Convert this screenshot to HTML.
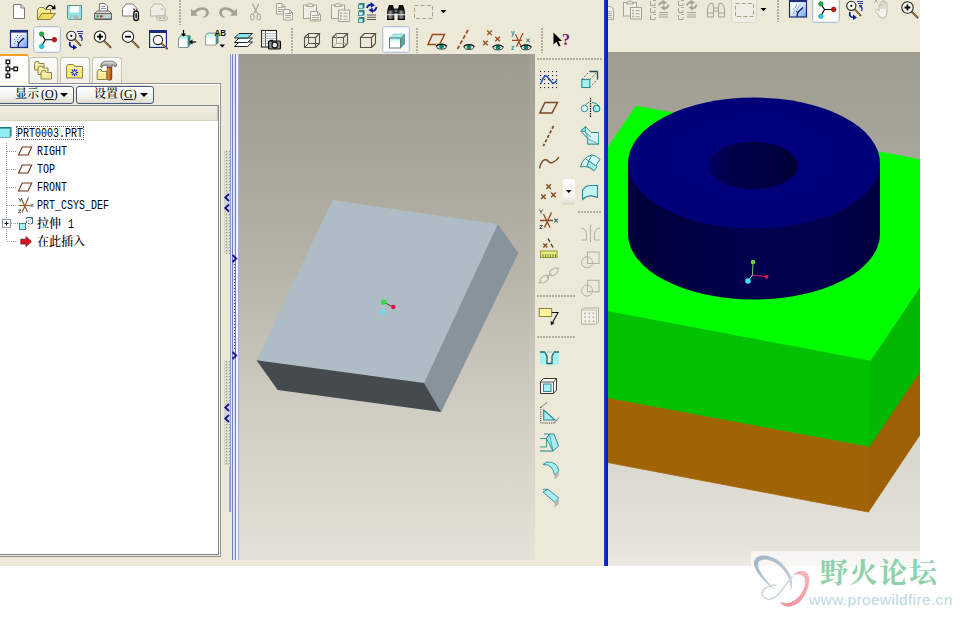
<!DOCTYPE html>
<html><head><meta charset="utf-8"><title>Pro/ENGINEER</title>
<style>
html,body{margin:0;padding:0;background:#fff;}
body{width:962px;height:618px;position:relative;overflow:hidden;font-family:"Liberation Sans","Noto Sans CJK SC",sans-serif;}
.abs{position:absolute;}
#app{position:absolute;left:0;top:0;width:920px;height:566px;background:#ece9d8;overflow:hidden;}
.ic{position:absolute;overflow:visible;}
.btnp{position:absolute;background:#fdfdfb;border:1px solid #b9c4d6;border-radius:3px;box-sizing:border-box;box-shadow:inset 0 0 2px #dfe6f0;}
.vsep{position:absolute;width:2px;background:repeating-linear-gradient(to bottom,#b3b0a2 0,#b3b0a2 2px,transparent 2px,transparent 3px);}
.hsep{position:absolute;height:2px;background:repeating-linear-gradient(to right,#b3b0a2 0,#b3b0a2 2px,transparent 2px,transparent 3px);}
.tab{position:absolute;top:57px;height:26px;box-sizing:border-box;border:1px solid #c6c5b8;border-bottom:none;border-radius:3px 3px 0 0;background:linear-gradient(#fcfcf9,#f1f0e8);}
.tbtn{position:absolute;top:86px;height:18px;box-sizing:border-box;border:1px solid #44597c;border-radius:3px;background:linear-gradient(#ffffff,#f3f2ec 60%,#dedccd);font:500 12px/15px "Liberation Serif","Noto Serif CJK SC",serif;color:#000;white-space:nowrap;}
.tree{position:absolute;font:12px/18px "Liberation Mono","Noto Sans CJK SC",monospace;color:#000;white-space:nowrap;}
.tl{position:absolute;left:0;height:18px;line-height:18px;}
.mc{display:inline-block;width:6px;text-align:center;font-family:"Liberation Serif",serif;font-size:12.5px;overflow:visible;}
.mono{display:inline-block;transform-origin:0 50%;transform:scaleX(0.833);font-family:"Liberation Mono",monospace;font-size:12px;letter-spacing:0;}
</style></head><body>
<div id="app">

<div class="abs" style="left:239px;top:54px;width:296px;height:506px;background:linear-gradient(#9d9b90 0%,#a7a59a 20%,#b8b6aa 45%,#cfcdc2 70%,#e3e1d7 100%);"></div>
<div class="abs" style="left:529px;top:54px;width:6px;height:506px;background:rgba(255,255,255,0.05);"></div>
<svg class="abs" style="left:238px;top:54px" width="297" height="506" viewBox="238 54 297 506">
<polygon points="332.4,200 497.9,224.2 424.1,383 256.5,360.2" fill="#adbcc5"/>
<polygon points="497.9,224.2 518.3,253.1 441.2,411.9 424.1,383" fill="#88949c"/>
<polygon points="256.5,360.2 424.1,383 441.2,411.9 277.7,389.9" fill="#454a4f"/>
<line x1="383.5" y1="302" x2="392" y2="306.5" stroke="#7a2a3a" stroke-width="1"/>
<line x1="383.5" y1="302" x2="383" y2="311" stroke="#8fd8e0" stroke-width="1"/>
<circle cx="383.7" cy="302.2" r="2.6" fill="#30e040"/>
<circle cx="393.3" cy="307" r="2.2" fill="#e01040"/>
<circle cx="383" cy="312.3" r="2.3" fill="#60e0f0"/>
</svg>

<div class="abs" style="left:608px;top:52px;width:312px;height:514px;background:linear-gradient(#a09e93 0%,#a5a398 15%,#b3b1a5 35%,#cccabf 60%,#dbd9cf 80%,#e5e3da 97%,#eceae3 100%);"></div>
<svg class="abs" style="left:608px;top:52px" width="312" height="514" viewBox="608 52 312 514"><g stroke-width="0.8" stroke-linejoin="round">
<defs>
<linearGradient id="cyl" x1="0" x2="1" y1="0" y2="0">
<stop offset="0" stop-color="#00003a"/><stop offset="0.2" stop-color="#000042"/><stop offset="0.5" stop-color="#00004e"/><stop offset="0.8" stop-color="#00004c"/><stop offset="1" stop-color="#00003e"/>
</linearGradient>
<linearGradient id="hole" x1="0" x2="1" y1="0" y2="0">
<stop offset="0" stop-color="#00005e"/><stop offset="0.3" stop-color="#000048"/><stop offset="0.6" stop-color="#000044"/><stop offset="0.85" stop-color="#00003a"/><stop offset="1" stop-color="#00002c"/>
</linearGradient>
<radialGradient id="topf" cx="0.5" cy="0.45" r="0.6">
<stop offset="0" stop-color="#00007e"/><stop offset="1" stop-color="#000076"/>
</radialGradient>
</defs>
<polygon points="608,147 636,106 920,159.6 920,288 870.7,361.2 608,311.6" fill="#00fe00" stroke="#00fe00"/>
<polygon points="608,311.6 870.7,361.2 869.5,447.2 608,398.5" fill="#02c102" stroke="#00c200"/>
<polygon points="870.7,361.2 920,288 920,372.5 869.5,447.2" fill="#02b802" stroke="#00b600"/>
<polygon points="608,398.5 869.5,447.2 868.4,512 608,462.6" fill="#a06406" stroke="#a06406"/>
<polygon points="869.5,447.2 920,372.5 920,434.7 868.4,512" fill="#9c6006" stroke="#9c6006"/>
</g><path d="M628,163 L628,234 A126,65.5 0 0 0 880,234 L880,163 Z" fill="url(#cyl)"/>
<ellipse cx="754" cy="163" rx="126" ry="65.5" fill="url(#topf)"/>
<ellipse cx="753" cy="165.5" rx="44.6" ry="23.8" fill="url(#hole)"/>
<line x1="752.5" y1="275" x2="753" y2="262" stroke="#80d060" stroke-width="1"/>
<line x1="752.5" y1="275" x2="766" y2="276.7" stroke="#e02050" stroke-width="1"/>
<line x1="752.5" y1="275" x2="748" y2="281" stroke="#a0e8f0" stroke-width="1"/>
<circle cx="753" cy="262" r="2.3" fill="#70d040"/>
<circle cx="766.5" cy="276.7" r="2" fill="#e01040"/>
<circle cx="748" cy="281" r="2.8" fill="#40e0ff"/>
</svg>
<div class="abs" style="left:604px;top:0;width:4px;height:566px;background:linear-gradient(to right,#1a40d0,#0828b8 60%,#0520a0);"></div>

<div class="abs" style="left:230px;top:54px;width:9px;height:506px;background:linear-gradient(to right,#ece9d8 0,#ece9d8 2px,#7484b8 2px,#7484b8 3px,#dfe5ff 3px,#dfe5ff 5px,#6c7cac 5px,#6c7cac 6px,#f4f6ff 6px,#f4f6ff 8px,#a4acd8 8px,#a4acd8 9px);"></div>
<div class="abs" style="left:230px;top:54px;width:2px;height:458px;background:linear-gradient(to right,#8c9cd8 0,#8c9cd8 1px,#e4e8fc 1px,#e4e8fc 2px);"></div>

<div class="abs" style="left:229px;top:466px;width:1px;height:46px;background:#a9a8c0;"></div>
<svg class="abs" style="left:0;top:0" width="240" height="566">
<defs><pattern id="gp" width="3" height="3" patternUnits="userSpaceOnUse"><rect width="3" height="3" fill="#d6d4c8"/><rect x="0" y="0" width="1" height="1" fill="#fff"/><rect x="1" y="1" width="1" height="1" fill="#9c9a8c"/></pattern></defs>
<rect x="224" y="150" width="6" height="104" fill="url(#gp)" shape-rendering="crispEdges"/><rect x="224" y="360" width="6" height="105" fill="url(#gp)" shape-rendering="crispEdges"/>
<rect x="224" y="193" width="6" height="20" fill="#d0d0e0"/>
<rect x="224" y="403" width="6" height="20" fill="#d0d0e0"/>
<polyline points="229,194 225.2,197.5 229,201" fill="none" stroke="#10108c" stroke-width="1.7"/>
<polyline points="229,204.5 225.2,208.0 229,211.5" fill="none" stroke="#10108c" stroke-width="1.7"/>
<polyline points="229,404 225.2,407.5 229,411" fill="none" stroke="#10108c" stroke-width="1.7"/>
<polyline points="229,415 225.2,418.5 229,422" fill="none" stroke="#10108c" stroke-width="1.7"/>
<polyline points="232.5,255 236.3,258.5 232.5,262" fill="none" stroke="#10108c" stroke-width="1.7"/>
<polyline points="232.5,352 236.3,355.5 232.5,359" fill="none" stroke="#10108c" stroke-width="1.7"/>
<line x1="234.5" y1="264" x2="234.5" y2="350" stroke="#404070" stroke-width="1" stroke-dasharray="1,2"/>
</svg>
<div class="abs" style="left:0;top:83px;width:221px;height:474px;box-sizing:border-box;border:1px solid #8e9094;border-left:none;background:#ece9d8;box-shadow:inset -1px 0 0 #fff, inset 0 1px 0 #fff;"></div>
<div class="abs" style="left:0;top:105px;width:219px;height:450px;box-sizing:border-box;border:1px solid #7c8590;border-left:none;background:#fff;"></div>
<div class="abs" style="left:0;top:106px;width:218px;height:15px;background:linear-gradient(#efede0,#e8e5d4);border-bottom:1px solid #d6d2c2;border-right:1px solid #c8c5b5;box-sizing:border-box;"></div>
<div class="abs" style="left:0;top:54px;width:29px;height:30px;background:#fdfdfb;border-right:1px solid #c6c5b8;border-top:2px solid #f5a020;border-radius:0 3px 0 0;box-sizing:border-box;"></div>
<div class="tab" style="left:29px;width:29px;"></div>
<div class="tab" style="left:60px;width:30px;"></div>
<div class="tab" style="left:92px;width:30px;"></div>
<div class="tbtn" style="left:-6px;width:80px;"><span style="position:absolute;left:20px;top:0;">显示<span style="margin-left:2px">(<u>O</u>)</span></span><span style="position:absolute;left:65px;top:6px;width:0;height:0;border:4px solid transparent;border-top:4.5px solid #000;border-bottom:none;"></span></div>
<div class="tbtn" style="left:76px;width:78px;"><span style="position:absolute;left:17px;top:0;">设置<span style="margin-left:2px">(<u>G</u>)</span></span><span style="position:absolute;left:63px;top:6px;width:0;height:0;border:4px solid transparent;border-top:4.5px solid #000;border-bottom:none;"></span></div>

<div class="tree" style="left:0;top:0;width:219px;height:560px;">
<div class="abs" style="left:16px;top:126px;width:68px;height:14px;border:1px dotted #555;box-sizing:border-box;"></div>
<div class="tl" style="top:125px;left:17px;"><span class="mono">PRT0003.PRT</span></div>
<div class="tl" style="top:143px;left:37px;"><span class="mono">RIGHT</span></div>
<div class="tl" style="top:161px;left:37px;"><span class="mono">TOP</span></div>
<div class="tl" style="top:179px;left:37px;"><span class="mono">FRONT</span></div>
<div class="tl" style="top:197px;left:37px;"><span class="mono">PRT_CSYS_DEF</span></div>
<div class="tl" style="top:214px;left:37px;"><span style="font-family:'Noto Serif CJK SC',serif;font-size:12px;font-weight:500;">拉伸</span> <span class="mono">1</span></div>
<div class="tl" style="top:232px;left:37px;"><span style="font-family:'Noto Serif CJK SC',serif;font-size:12px;font-weight:500;">在此插入</span></div>
</div>
<svg class="abs" style="left:0;top:0" width="230" height="260" viewBox="0 0 230 260"><rect x="6.1" y="60.1" width="3.6" height="3.6" fill="#fff" stroke="#000" stroke-width="1.2"/><rect x="6.1" y="67.1" width="3.6" height="3.6" fill="#fff" stroke="#000" stroke-width="1.2"/><rect x="6.1" y="74.1" width="3.6" height="3.6" fill="#fff" stroke="#000" stroke-width="1.2"/><rect x="13.9" y="67.1" width="3.6" height="3.6" fill="#fff" stroke="#000" stroke-width="1.2"/><path d="M7.9,64.3 V66.6 M7.9,71.3 V73.6 M10.3,68.9 H13.4" stroke="#000" stroke-width="1.1"/><path d="M34.5,70.0 V63.5 L36,61.5 H38.41 L39.25,63.5 H44.0 V70.0 Z" fill="#f7ec92" stroke="#8a8250" stroke-width="1"/><path d="M35.5,64.8 H43.0" stroke="#fffbe0" stroke-width="1"/><path d="M38.0,74.5 V68.0 L39.5,66.0 H42.12 L43.0,68.0 H48.0 V74.5 Z" fill="#f7ec92" stroke="#8a8250" stroke-width="1"/><path d="M39.0,69.3 H47.0" stroke="#fffbe0" stroke-width="1"/><path d="M41.0,79.0 V72.5 L42.5,70.5 H45.33 L46.25,72.5 H51.5 V79.0 Z" fill="#f7ec92" stroke="#8a8250" stroke-width="1"/><path d="M42.0,73.8 H50.5" stroke="#fffbe0" stroke-width="1"/><path d="M66.5,78.0 V66.5 L68,64.5 H73.14 L74.5,66.5 H82.5 V78.0 Z" fill="#f7ea70" stroke="#8a8250" stroke-width="1"/><path d="M67.5,67.8 H81.5" stroke="#fffbe0" stroke-width="1"/><path d="M74.5,68.8 V76.2 M70.8,72.5 H78.2 M71.9,69.9 L77.1,75.1 M77.1,69.9 L71.9,75.1" stroke="#1030c0" stroke-width="1.2"/><circle cx="74.5" cy="72.5" r="1.2" fill="#fff"/><path d="M97.2,79.5 V71.5 L98.7,69.5 H101.11 L101.95,71.5 H106.7 V79.5 Z" fill="#f7ec92" stroke="#8a8250" stroke-width="1"/><path d="M98.2,72.8 H105.7" stroke="#fffbe0" stroke-width="1"/><defs><linearGradient id="hh" x1="0" y1="0" x2="0" y2="1"><stop offset="0" stop-color="#e8e8e8"/><stop offset="1" stop-color="#7a7a7a"/></linearGradient><linearGradient id="hd" x1="0" x2="1"><stop offset="0" stop-color="#f0b040"/><stop offset="0.5" stop-color="#d07020"/><stop offset="1" stop-color="#8a3a10"/></linearGradient></defs><path d="M100.5,66.5 Q101,62 105,61.2 H112 Q116,61.5 117,65.5 L115,67 Q114,64.8 112,65 V67.8 H107 V65 Q103,64.5 102,67.5 Z" fill="url(#hh)" stroke="#555" stroke-width="0.7"/><rect x="107.2" y="67.5" width="4.6" height="12.5" rx="1.5" fill="url(#hd)" stroke="#6a3010" stroke-width="0.7"/><path d="M-2,128.5 L0,127 H11.5 V136 L10,137.5 H-2 Z" fill="#1a7a80"/><rect x="-2" y="128.5" width="12" height="9" fill="#8ef0f0" stroke="#5aa0a8" stroke-width="0.7"/><path d="M6.5,143 V241" stroke="#9a9a9a" stroke-width="1" stroke-dasharray="1,1"/><path d="M7,151.5 H17" stroke="#9a9a9a" stroke-width="1" stroke-dasharray="1,1"/><path d="M7,169.5 H17" stroke="#9a9a9a" stroke-width="1" stroke-dasharray="1,1"/><path d="M7,187.5 H17" stroke="#9a9a9a" stroke-width="1" stroke-dasharray="1,1"/><path d="M7,205.5 H17" stroke="#9a9a9a" stroke-width="1" stroke-dasharray="1,1"/><path d="M7,241.5 H17" stroke="#9a9a9a" stroke-width="1" stroke-dasharray="1,1"/><path d="M11,223.5 H18" stroke="#9a9a9a" stroke-width="1" stroke-dasharray="1,1"/><path d="M22.2,147 H31.8 L28,155 H18.6 Z" fill="#fff" stroke="#6e3418" stroke-width="1.1"/><path d="M22.2,165 H31.8 L28,173 H18.6 Z" fill="#fff" stroke="#6e3418" stroke-width="1.1"/><path d="M22.2,183 H31.8 L28,191 H18.6 Z" fill="#fff" stroke="#6e3418" stroke-width="1.1"/><path d="M18.5,205.5 H30.5 M21.5,199 L27.5,212 M28.5,197.5 L22,212.5" stroke="#9a5a2a" stroke-width="1.2" fill="none"/><path d="M18.5,198 L20.3,200.5 L22,198 M20.3,200.5 V202" stroke="#444" stroke-width="0.9" fill="none"/><path d="M18.5,210 H21 L18.5,212.8 H21" stroke="#444" stroke-width="0.9" fill="none"/><path d="M30.5,203.8 L33.5,207 M33.5,203.8 L30.5,207" stroke="#556" stroke-width="1"/><rect x="2.5" y="219.5" width="8" height="8" fill="#fff" stroke="#8a9aa8" stroke-width="1"/><path d="M4.5,223.5 H8.5 M6.5,221.5 V225.5" stroke="#000" stroke-width="1"/><rect x="19.5" y="223.5" width="6" height="6" fill="#a8f0f4" stroke="#3a8a98" stroke-width="1"/><path d="M26.5,217.5 H32.5 V223.5" fill="none" stroke="#3a6a78" stroke-width="1"/><path d="M26.5,217.5 V222 M28,223.5 H32.5" fill="none" stroke="#3a6a78" stroke-width="1" stroke-dasharray="1.5,1.5"/><path d="M25.5,223.5 L32.5,217.5" stroke="#3a6a78" stroke-width="0.9" stroke-dasharray="2,1.2"/><path d="M25.5,229.5 L31,224" stroke="#c05050" stroke-width="0.8" stroke-dasharray="1.5,1.5"/><path d="M20.8,239.2 H26 V236.6 L31.4,241.6 L26,246.6 V244 H20.8 Z" fill="#d81424" stroke="#6a0008" stroke-width="0.7"/></svg>
<div class="abs" style="left:535px;top:54px;width:69px;height:512px;background:#ece9d8;"></div>
<div class="hsep" style="left:537px;top:58px;width:66px;"></div>
<div class="hsep" style="left:578px;top:211px;width:24px;"></div>
<div class="hsep" style="left:537px;top:295px;width:39px;"></div>
<div class="hsep" style="left:537px;top:336px;width:39px;"></div>
<svg class="abs" style="left:0;top:0" width="610" height="566" viewBox="0 0 610 566"><rect x="540" y="71" width="1.1" height="1.1" fill="#223"/><rect x="540" y="75" width="1.1" height="1.1" fill="#223"/><rect x="540" y="79" width="1.1" height="1.1" fill="#223"/><rect x="540" y="83" width="1.1" height="1.1" fill="#223"/><rect x="540" y="87" width="1.1" height="1.1" fill="#223"/><rect x="544" y="71" width="1.1" height="1.1" fill="#223"/><rect x="544" y="75" width="1.1" height="1.1" fill="#223"/><rect x="544" y="79" width="1.1" height="1.1" fill="#223"/><rect x="544" y="83" width="1.1" height="1.1" fill="#223"/><rect x="544" y="87" width="1.1" height="1.1" fill="#223"/><rect x="548" y="71" width="1.1" height="1.1" fill="#223"/><rect x="548" y="75" width="1.1" height="1.1" fill="#223"/><rect x="548" y="79" width="1.1" height="1.1" fill="#223"/><rect x="548" y="83" width="1.1" height="1.1" fill="#223"/><rect x="548" y="87" width="1.1" height="1.1" fill="#223"/><rect x="552" y="71" width="1.1" height="1.1" fill="#223"/><rect x="552" y="75" width="1.1" height="1.1" fill="#223"/><rect x="552" y="79" width="1.1" height="1.1" fill="#223"/><rect x="552" y="83" width="1.1" height="1.1" fill="#223"/><rect x="552" y="87" width="1.1" height="1.1" fill="#223"/><rect x="556" y="71" width="1.1" height="1.1" fill="#223"/><rect x="556" y="75" width="1.1" height="1.1" fill="#223"/><rect x="556" y="79" width="1.1" height="1.1" fill="#223"/><rect x="556" y="83" width="1.1" height="1.1" fill="#223"/><rect x="556" y="87" width="1.1" height="1.1" fill="#223"/><path d="M541,83.5 Q544,74 547,76.5 Q550,80 552.5,83 Q554.5,84 556.8,80.5" fill="none" stroke="#2a56c8" stroke-width="1.7"/><path d="M589.5,71.5 H597.5 V79.5" fill="none" stroke="#2a4a50" stroke-width="1.3"/><path d="M581.8,79.5 L589.5,71.5 M589.8,79.5 L597.5,71.5 M589.8,87.5 L597.5,79.5" stroke="#4a6a70" stroke-width="0.9" stroke-dasharray="2,1.5"/><rect x="581.8" y="79.5" width="8" height="8" fill="#a8f0f4" stroke="#2a8a90" stroke-width="1.1"/><path d="M545,102.5 H557.5 L552,113 H539.8 Z" fill="none" stroke="#7a4a28" stroke-width="1.5"/><path d="M590.5,98 V117" stroke="#111" stroke-width="1.3" stroke-dasharray="1.5,1"/><circle cx="584.5" cy="108.5" r="3.2" fill="#dffafa" stroke="#2a8a90" stroke-width="1"/><circle cx="596.5" cy="108.5" r="3.2" fill="#a8f0f4" stroke="#2a8a90" stroke-width="1.2"/><path d="M585.5,105 L589,102 M592,102.5 Q597,102.5 599,106" fill="none" stroke="#2a8a90" stroke-width="1" /><path d="M553.5,126 L543.3,146" stroke="#7a4a28" stroke-width="1.7" stroke-dasharray="3.2,1.8"/><path d="M539.5,168.5 Q541,161 545,159.5 Q547.5,159.5 549.5,162.5 Q552,163.5 555,161 Q557.5,159.5 558.8,157" fill="none" stroke="#7a4a28" stroke-width="1.4"/><path d="M580.8,131 L585.5,126.5 L591,132.5 H598.5 V144 H587.5 V138.5 Z" fill="#e8fbfb" stroke="#2a8a90" stroke-width="1"/><path d="M580.8,131 L585.5,126.5 L585.5,132 Z" fill="#70e0dc" stroke="#2a8a90" stroke-width="0.8"/><path d="M585.5,132 L598.5,144 H587.5 V138.5 Z" fill="#b8e8e8" stroke="#2a8a90" stroke-width="0.8"/><path d="M587.5,138.5 L598.5,144 L598.5,133" fill="#d0f4f4" stroke="#2a8a90" stroke-width="0.6"/><path d="M580.5,167 Q583,157 592,155 Q597,155.5 600,159.5 Q596,164 594,171 Q588,165 580.5,167 Z" fill="#d8fafa" stroke="#2a8a90" stroke-width="1"/><path d="M585.5,159 Q590,161 597,167 M592,155 Q588,161 587,166" fill="none" stroke="#2a8a90" stroke-width="0.9"/><path d="M589,161.5 L597,166.5 L594,171 Q591,167.5 587,166 Z" fill="#a8f0f4" stroke="#2a8a90" stroke-width="0.7"/><path d="M546.3000000000001,184.29999999999998 L550.9,188.9 M550.9,184.29999999999998 L546.3000000000001,188.9" stroke="#8a4a20" stroke-width="1.4"/><path d="M551.1,192.6 L555.6999999999999,197.20000000000002 M555.6999999999999,192.6 L551.1,197.20000000000002" stroke="#8a4a20" stroke-width="1.4"/><path d="M541.1,194.5 L545.6999999999999,199.10000000000002 M545.6999999999999,194.5 L541.1,199.10000000000002" stroke="#8a4a20" stroke-width="1.4"/><defs><linearGradient id="dd" x1="0" y1="0" x2="0" y2="1"><stop offset="0" stop-color="#fdfdfb"/><stop offset="0.7" stop-color="#f4f3ee"/><stop offset="1" stop-color="#d8d6ca"/></linearGradient></defs><rect x="562.5" y="179" width="12.5" height="26" rx="2" fill="url(#dd)"/><path d="M566,190 H571.5 L568.7,193 Z" fill="#000"/><path d="M582.5,199.5 V190.5 Q585,185.5 591,185.5 H597.5 V197.5 Q589,193.5 582.5,199.5 Z" fill="#c4f4f8" stroke="#2a8a90" stroke-width="1.1"/><path d="M540,220.5 H553 M543.5,214 L550,227.5 M551.5,212.5 L544.5,227.5" stroke="#8a4a20" stroke-width="1.3" fill="none"/><path d="M539.2,209.5 L541,212 L542.8,209.5 M541,212 V213.5" stroke="#4a5a58" stroke-width="1" fill="none"/><path d="M539.5,225.5 H542.5 L539.5,228.5 H542.5" stroke="#4a5a58" stroke-width="1" fill="none"/><path d="M554.2,218.7 L557.8,222.3 M557.8,218.7 L554.2,222.3" stroke="#3a6a68" stroke-width="1.2"/><path d="M543.3,243.5 L547.3,247.5 M547.3,243.5 L543.3,247.5" stroke="#8a4a20" stroke-width="1.4"/><path d="M548,238.5 L550,242 M551,244 L553,247.5" stroke="#5a3a10" stroke-width="1.5"/><rect x="540.5" y="251" width="16.5" height="6.5" fill="#e6ec7a" stroke="#8a9030" stroke-width="0.9"/><path d="M543,254 V257.5" stroke="#5a6a20" stroke-width="0.8"/><path d="M545.5,254 V257.5" stroke="#5a6a20" stroke-width="0.8"/><path d="M548,254 V257.5" stroke="#5a6a20" stroke-width="0.8"/><path d="M550.5,254 V257.5" stroke="#5a6a20" stroke-width="0.8"/><path d="M553,254 V257.5" stroke="#5a6a20" stroke-width="0.8"/><path d="M555.5,254 V257.5" stroke="#5a6a20" stroke-width="0.8"/><g transform="translate(549,275.5) rotate(-38)" fill="none" stroke="#b3b0a2" stroke-width="1"><rect x="-10.5" y="-2.8" width="9" height="5.6" rx="2.8"/><rect x="1.5" y="-2.8" width="9" height="5.6" rx="2.8"/><path d="M-3,0 H3 M-13,0 H-10.5 M10.5,0 H13" stroke-width="1.4"/></g><path d="M590.5,224.5 V242 M581,228 Q586.5,229 586.5,235 V240 H581 M600,228 Q594.5,229 594.5,235 V240 H600" fill="none" stroke="#b3b0a2" stroke-width="1"/><rect x="587.5" y="252" width="11.5" height="11.5" fill="none" stroke="#b3b0a2" stroke-width="1"/><circle cx="587" cy="262.3" r="5.5" fill="none" stroke="#b3b0a2" stroke-width="1"/><rect x="587.5" y="280.3" width="11.5" height="11.5" fill="none" stroke="#b3b0a2" stroke-width="1"/><circle cx="587" cy="290.6" r="5.5" fill="none" stroke="#b3b0a2" stroke-width="1"/><rect x="539.2" y="308.5" width="12.5" height="8" fill="#faf4a0" stroke="#8a8430" stroke-width="1"/><path d="M551.8,312.5 H558 L551.5,324.5" fill="none" stroke="#111" stroke-width="1.1"/><path d="M550.5,321 L551,325.2 L554.6,323 Z" fill="#111"/><path d="M581.5,310 L583.5,308 H598.5 V322 L596.5,324 H581.5 Z" fill="#f3f1e8" stroke="#b3b0a2" stroke-width="1"/><rect x="581.5" y="310" width="15" height="14" fill="#f3f1e8" stroke="#b3b0a2" stroke-width="0.8"/><rect x="584.3" y="312.5" width="1.6" height="1.6" fill="#b3b0a2"/><rect x="584.3" y="316.5" width="1.6" height="1.6" fill="#b3b0a2"/><rect x="584.3" y="320.5" width="1.6" height="1.6" fill="#b3b0a2"/><rect x="588.5" y="312.5" width="1.6" height="1.6" fill="#b3b0a2"/><rect x="588.5" y="316.5" width="1.6" height="1.6" fill="#b3b0a2"/><rect x="588.5" y="320.5" width="1.6" height="1.6" fill="#b3b0a2"/><rect x="592.6999999999999" y="312.5" width="1.6" height="1.6" fill="#b3b0a2"/><rect x="592.6999999999999" y="316.5" width="1.6" height="1.6" fill="#b3b0a2"/><rect x="592.6999999999999" y="320.5" width="1.6" height="1.6" fill="#b3b0a2"/><rect x="540" y="352" width="19" height="12.5" fill="#a8f0f4"/><path d="M540,352 H545 Q546,355 547,356 V363.5 H552 V356 Q553,355 554,352 H559" fill="#ece9d8" stroke="#1a6a72" stroke-width="1.3"/><rect x="545.3" y="350" width="8.4" height="2.6" fill="#ece9d8"/><path d="M547.5,352 H552" stroke="#2a8a90" stroke-width="0.8" stroke-dasharray="1,1"/><path d="M540.5,382 L543.5,378.5 H556.5 V390 L553.5,393.5 H540.5 Z" fill="#f6f6f2" stroke="#333" stroke-width="1"/><path d="M553.5,393.5 V382 H540.5 M553.5,382 L556.5,378.5" fill="none" stroke="#333" stroke-width="0.8"/><rect x="543.5" y="384" width="7.5" height="7.5" fill="#a8f0f4" stroke="#2a8a90" stroke-width="1"/><path d="M540.8,407 V423 H554.5" fill="none" stroke="#222" stroke-width="1" stroke-dasharray="1,1.2"/><path d="M541,407 L547,402.5 M554.5,423 L559,417.5" stroke="#666" stroke-width="0.8"/><path d="M543.7,410 V420 H555 Z" fill="#a8f0f4" stroke="#2a8a90" stroke-width="1.1"/><path d="M540,438.5 H546.5 V447 H540 M546.5,438.5 L549.5,434 H544" fill="none" stroke="#2a8a90" stroke-width="0.9"/><path d="M546.5,438.5 L549.5,434 H554 L558.5,446 L553,451 Z" fill="#a8f0f4" stroke="#2a8a90" stroke-width="1"/><path d="M540,451 H553" stroke="#2a8a90" stroke-width="1.1"/><path d="M549.5,434 L553,451" stroke="#2a8a90" stroke-width="0.7"/><path d="M543,464.5 Q553,464 554.5,475 L558.8,471 Q557.5,461.5 547,462 Z" fill="#a8f0f4" stroke="#2a8a90" stroke-width="0.9"/><path d="M554.5,475 V479.5 L558.8,476 V471 Z" fill="#b8b8b0"/><path d="M543,492 L554.5,502 L558.8,498 L548,489.3 Z" fill="#a8f0f4" stroke="#2a8a90" stroke-width="0.9"/><path d="M554.5,502 V507.5 L558.8,504 V498 Z" fill="#b8b8b0"/><path d="M543,489.3 H548" stroke="#2a8a90" stroke-width="0.9"/></svg>
<svg class="abs" style="left:0;top:0" width="920" height="60" viewBox="0 0 920 60"><rect x="33.5" y="26.5" width="27" height="26" rx="3" fill="#fcfcfa" stroke="#b4c0d4" stroke-width="1"/><rect x="34.5" y="27.5" width="25" height="24" rx="2" fill="none" stroke="#e6ecf6" stroke-width="1"/><rect x="382.5" y="26.5" width="27" height="26" rx="3" fill="#fcfcfa" stroke="#b4c0d4" stroke-width="1"/><rect x="383.5" y="27.5" width="25" height="24" rx="2" fill="none" stroke="#e6ecf6" stroke-width="1"/><rect x="812.5" y="-3.5" width="27" height="26" rx="3" fill="#fcfcfa" stroke="#b4c0d4" stroke-width="1"/><rect x="813.5" y="-2.5" width="25" height="24" rx="2" fill="none" stroke="#e6ecf6" stroke-width="1"/><rect x="731.5" y="-3.5" width="25" height="26" rx="3" fill="#f0eee4" stroke="#dcd9cc" stroke-width="1"/><g transform="translate(13,4)" ><path d="M0.5,0.5 H8 L11.5,4 V14.5 H0.5 Z" fill="#fff" stroke="#7b7a70" stroke-width="1"/><path d="M8,0.5 V4 H11.5" fill="#e8e8e8" stroke="#7b7a70" stroke-width="1"/></g><g transform="translate(37,4)" ><path d="M0.5,15.5 V5.5 L2.5,3.5 H6.5 L8,5.5 H13.5 V9" fill="#f6e98a" stroke="#8a7e3a" stroke-width="1"/><path d="M0.5,15.5 L5,9.5 H18.5 L13.5,15.5 Z" fill="#f0dc60" stroke="#8a7e3a" stroke-width="1"/><path d="M9,5 Q12,-1 16,3" fill="none" stroke="#000" stroke-width="1.3"/><path d="M14,5.2 L18.6,5.2 L18,0.8 Z" fill="#000"/></g><g transform="translate(67,5)" ><path d="M0.5,0.5 H14.5 V14.5 H1.8 L0.5,13.2 Z" fill="#8fe6e6" stroke="#6a8a8a" stroke-width="1"/><rect x="3" y="1" width="9" height="6.5" fill="#fff"/><rect x="3.5" y="10.5" width="8" height="4" fill="#b0b4b4"/><rect x="4.5" y="11.2" width="2" height="3" fill="#8fe6e6"/></g><g transform="translate(94,3)" ><path d="M5.5,8 V0.5 H11 L13.5,3 V8" fill="#fff" stroke="#777" stroke-width="1"/><path d="M7,3.5 H11 M7,5.5 H12" stroke="#888" stroke-width="0.9"/><path d="M0.5,10.5 L3.5,8 H15 L17.5,10.5 Z" fill="#d9d9d4" stroke="#666" stroke-width="1"/><rect x="0.5" y="10.5" width="17" height="5.5" fill="#c4ccc8" stroke="#666" stroke-width="1"/><rect x="2.5" y="12.3" width="2.2" height="2" fill="#20a040"/><rect x="6" y="12.3" width="2.5" height="2" fill="#c02020"/><rect x="10" y="12.3" width="5.5" height="2" fill="#a6e0dc"/><path d="M1,16.5 H17.5" stroke="#555" stroke-width="1"/></g><g transform="translate(122,3.5)" ><path d="M0.5,5 L4,0.5 H11 L15,5 V12.5 H0.5 Z" fill="#fdfdfd" stroke="#777" stroke-width="1"/><rect x="11.2" y="5" width="1.8" height="1.8" fill="#a03030"/><path d="M14,5 L15,7.5" stroke="#555" stroke-width="0.8"/><rect x="11.8" y="7.5" width="4.6" height="9.5" rx="2.3" fill="#fff" stroke="#000" stroke-width="1.3"/><rect x="13.4" y="9.5" width="1.4" height="5.5" rx="0.7" fill="#000"/></g><g transform="translate(150,3.5)" ><path d="M0.5,5 L4,0.5 H11 L15,5 V12.5 H0.5 Z" fill="#f0eee4" stroke="#b7b4a6" stroke-width="1"/><rect x="11.2" y="5" width="1.6" height="1.6" fill="#b7b4a6"/><rect x="6.5" y="12.5" width="11" height="4.5" rx="2.2" fill="#ece9d8" stroke="#b7b4a6" stroke-width="1"/><rect x="8.5" y="13.8" width="3" height="1.8" fill="#b7b4a6"/><rect x="12.5" y="13.8" width="3" height="1.8" fill="#b7b4a6"/></g><g transform="translate(191,7)" ><path d="M0,1.5 L0,8.8 L7,8.8 L4.8,6.5 Q8,2.5 12,2.8 Q15.5,3.5 15,6.5 Q14.5,9 12,10 L13,11 Q17.5,9.5 18,5.5 Q17.5,0.5 12,0.2 Q6.5,0 2.5,4 Z" fill="#a5a293"/></g><g transform="translate(237,7) scale(-1,1)"><path d="M0,1.5 L0,8.8 L7,8.8 L4.8,6.5 Q8,2.5 12,2.8 Q15.5,3.5 15,6.5 Q14.5,9 12,10 L13,11 Q17.5,9.5 18,5.5 Q17.5,0.5 12,0.2 Q6.5,0 2.5,4 Z" fill="#a5a293"/></g><g transform="translate(250,3.5)" ><path d="M2.5,0 L6.5,9 M8.8,0 L4.8,9" stroke="#a5a293" stroke-width="1.1" fill="none"/><rect x="0.6" y="10.5" width="3.4" height="6" rx="1.7" fill="none" stroke="#a5a293" stroke-width="1"/><rect x="7.2" y="10.5" width="3.4" height="6" rx="1.7" fill="none" stroke="#a5a293" stroke-width="1"/><path d="M3.2,10.8 L5,8 M8,10.8 L6.3,8" stroke="#a5a293" stroke-width="1"/></g><g transform="translate(276,3)" ><path d="M0.5,0.5 H6.0 L9.0,3.5 V11.0 H0.5 Z" fill="#f4f2ea" stroke="#a5a293" stroke-width="1"/><path d="M6.0,0.5 V3.5 H9.0" fill="none" stroke="#a5a293" stroke-width="0.9"/><path d="M2,4.5 H7.5" stroke="#a5a293" stroke-width="0.9"/><path d="M2,6.5 H7.5" stroke="#a5a293" stroke-width="0.9"/><path d="M2,8.5 H7.5" stroke="#a5a293" stroke-width="0.9"/><path d="M7.5,6.5 H13.5 L16.5,9.5 V17.0 H7.5 Z" fill="#f4f2ea" stroke="#a5a293" stroke-width="1"/><path d="M13.5,6.5 V9.5 H16.5" fill="none" stroke="#a5a293" stroke-width="0.9"/><path d="M9,10.5 H15" stroke="#a5a293" stroke-width="0.9"/><path d="M9,12.5 H15" stroke="#a5a293" stroke-width="0.9"/><path d="M9,14.5 H15" stroke="#a5a293" stroke-width="0.9"/></g><g transform="translate(303,3)" ><rect x="0.5" y="2" width="13" height="13.5" fill="#f0eee4" stroke="#a5a293" stroke-width="1"/><path d="M3.5,3.5 L5,0.8 H9 L10.5,3.5 Z" fill="#f0eee4" stroke="#a5a293" stroke-width="1"/><path d="M7.5,8.5 H14.5 L17.5,11.5 V18.0 H7.5 Z" fill="#f4f2ea" stroke="#a5a293" stroke-width="1"/><path d="M14.5,8.5 V11.5 H17.5" fill="none" stroke="#a5a293" stroke-width="0.9"/><path d="M9,12.5 H16" stroke="#a5a293" stroke-width="0.9"/><path d="M9,14.5 H16" stroke="#a5a293" stroke-width="0.9"/><path d="M9,16.5 H16" stroke="#a5a293" stroke-width="0.9"/></g><g transform="translate(331,3)" ><rect x="0.5" y="2" width="13" height="13.5" fill="#f0eee4" stroke="#a5a293" stroke-width="1"/><path d="M3.5,3.5 L5,0.8 H9 L10.5,3.5 Z" fill="#f0eee4" stroke="#a5a293" stroke-width="1"/><rect x="7.5" y="7" width="11" height="11.5" fill="#f2f0e6" stroke="#a5a293" stroke-width="1"/><rect x="9.2" y="9.2" width="1.6" height="1.6" fill="#a5a293"/><path d="M12.5,10.2 H16.5" stroke="#a5a293" stroke-width="1"/><rect x="9.2" y="12.2" width="1.6" height="1.6" fill="#a5a293"/><path d="M12.5,13.2 H16.5" stroke="#a5a293" stroke-width="1"/><rect x="9.2" y="15.2" width="1.6" height="1.6" fill="#a5a293"/><path d="M12.5,16.2 H16.5" stroke="#a5a293" stroke-width="1"/></g><g transform="translate(358,2.5)" ><path d="M0,2.0 L1.5,0.5 H6.5 V5.0 L5,6.5 H0 Z" fill="#2a7a7a"/><rect x="0.8" y="2.3" width="3.8" height="3.6" fill="#aef0f4"/><path d="M0,9.0 L1.5,7.5 H6.5 V12.0 L5,13.5 H0 Z" fill="#2a7a7a"/><rect x="0.8" y="9.3" width="3.8" height="3.6" fill="#aef0f4"/><path d="M0,16.0 L1.5,14.5 H6.5 V19.0 L5,20.5 H0 Z" fill="#2a7a7a"/><rect x="0.8" y="16.3" width="3.8" height="3.6" fill="#aef0f4"/><path d="M9,5.5 Q10,1.5 14,2.2" fill="none" stroke="#0a1e9a" stroke-width="1.8"/><path d="M12.5,-0.5 L17,2.8 L12.8,5.2 Z" fill="#0a1e9a"/><path d="M18.5,4.5 Q17.5,9 13.5,8.2" fill="none" stroke="#0a1e9a" stroke-width="1.8"/><path d="M15,10.8 L10.5,7.6 L14.6,5.2 Z" fill="#0a1e9a"/><path d="M9,12.5 H18" stroke="#555" stroke-width="1"/><path d="M9,14.8 H18" stroke="#555" stroke-width="1"/><path d="M9,17 H18" stroke="#555" stroke-width="1"/></g><g transform="translate(387,5)" ><defs><linearGradient id="bn" x1="0" x2="1"><stop offset="0" stop-color="#111"/><stop offset="0.45" stop-color="#999"/><stop offset="1" stop-color="#111"/></linearGradient></defs><path d="M2,0 H6 L7,4 V6 H0.5 V4 Z" fill="#111"/><path d="M16,0 H12 L11,4 V6 H17.5 V4 Z" fill="#111"/><rect x="0" y="5.5" width="7.2" height="9.5" fill="url(#bn)"/><rect x="10.8" y="5.5" width="7.2" height="9.5" fill="url(#bn)"/><rect x="0" y="9.2" width="7.2" height="1" fill="#eee"/><rect x="10.8" y="9.2" width="7.2" height="1" fill="#eee"/><rect x="0" y="13.8" width="7.2" height="1.2" fill="#000"/><rect x="10.8" y="13.8" width="7.2" height="1.2" fill="#000"/><rect x="6.5" y="3.5" width="5" height="5" fill="#222"/><circle cx="9" cy="6" r="1.3" fill="#777"/></g><g transform="translate(414,5)" ><rect x="0.5" y="0.5" width="18" height="13" fill="none" stroke="#a3a092" stroke-width="1" stroke-dasharray="4,2.2"/></g><g transform="translate(440.5,10)" ><path d="M0,0 H6 L3,3.2 Z" fill="#000"/></g><g transform="translate(10,30)" ><defs><linearGradient id="rp" x1="0" y1="0" x2="1" y2="1"><stop offset="0" stop-color="#fff"/><stop offset="0.45" stop-color="#e4eeff"/><stop offset="1" stop-color="#6a9af0"/></linearGradient></defs><rect x="0.5" y="0.5" width="17" height="17" fill="url(#rp)" stroke="#1a2c7c" stroke-width="1.2"/><rect x="0" y="0" width="18" height="2.6" fill="#1a2c7c"/><path d="M8,17 Q8.2,13.5 9.5,12.3 L14,8" fill="none" stroke="#0c1650" stroke-width="1.3"/><path d="M9,13 L7,11.3" stroke="#0c1650" stroke-width="1"/><path d="M4,9.5 h1 M6,7.5 h1 M5,11.5 h1 M7.5,9.5 h1 M9,7.5 h1 M4,13.5 h1 M10.5,5.5 h1 M7,5.5 h1" stroke="#5a7ad0" stroke-width="1"/></g><g transform="translate(45.2,39.7)" ><path d="M0,0 L-3.5,-5.4 M0,0 L-3.5,6.6 M0,0 H9" stroke="#000" stroke-width="1.1" fill="none"/><circle cx="-3.6" cy="-5.6" r="2.3" fill="#20b040" stroke="#0a7020" stroke-width="0.5"/><circle cx="9.2" cy="0" r="2.4" fill="#c01818" stroke="#800" stroke-width="0.5"/><circle cx="-3.6" cy="6.8" r="2.3" fill="#20d0d8" stroke="#0a9098" stroke-width="0.5"/></g><g transform="translate(65,30)" ><path d="M9.5,9.1 L15.5,15.4" stroke="#6a4a2a" stroke-width="2" stroke-linecap="round"/><path d="M8.9,8.8 L14.9,15.1" stroke="#c9a070" stroke-width="0.7"/><circle cx="6.3" cy="5.8" r="4.6" fill="#fbfbf8" stroke="#222" stroke-width="1.1"/><circle cx="6.3" cy="5.8" r="1.1" fill="#000"/><path d="M12,1.5 H18 M13,3.5 H18 M14,5.5 H17" stroke="#2a3ab0" stroke-width="1" fill="none"/><path d="M14.5,6.5 Q18.5,7 16.5,11" fill="none" stroke="#1a2aa0" stroke-width="1.3"/><path d="M5,12 Q3.5,17.5 9,17.5" fill="none" stroke="#0a1890" stroke-width="1.7"/><path d="M8,14.5 L12,17.5 L8,20 Z" fill="#0a1890"/></g><g transform="translate(0,0)" ><path d="M104.0,40.7 L110.5,47.3" stroke="#6a4a2a" stroke-width="2" stroke-linecap="round"/><path d="M103.4,40.4 L109.9,47.0" stroke="#c9a070" stroke-width="0.7"/><circle cx="100" cy="36.7" r="5.7" fill="#fbfbf8" stroke="#222" stroke-width="1.1"/><path d="M97,36.7 H103 M100,33.7 V39.7" stroke="#000" stroke-width="1.8"/><path d="M132.0,40.7 L138.5,47.3" stroke="#6a4a2a" stroke-width="2" stroke-linecap="round"/><path d="M131.4,40.4 L137.9,47.0" stroke="#c9a070" stroke-width="0.7"/><circle cx="128" cy="36.7" r="5.7" fill="#fbfbf8" stroke="#222" stroke-width="1.1"/><path d="M125,36.7 H131" stroke="#000" stroke-width="1.8"/></g><g transform="translate(149,30)" ><rect x="0.6" y="0.6" width="16.8" height="16.8" fill="#fbfbff" stroke="#1a2c7c" stroke-width="1.2"/><rect x="0" y="0" width="18" height="3" fill="#1a2c7c"/><path d="M12.3,13.2 L18,18.5" stroke="#6a4a2a" stroke-width="2" stroke-linecap="round"/><path d="M11.7,12.9 L17.4,18.2" stroke="#c9a070" stroke-width="0.7"/><circle cx="9" cy="10" r="4.6" fill="#fbfbf8" stroke="#222" stroke-width="1.1"/></g><g transform="translate(178,30)" ><defs><linearGradient id="ro" x1="0" y1="0" x2="0" y2="1"><stop offset="0" stop-color="#8fe8e4"/><stop offset="0.5" stop-color="#fff"/><stop offset="1" stop-color="#fff"/></linearGradient></defs><path d="M0.5,8.5 L3,5.5 H12.5 V14.5 L10,17.5 H0.5 Z" fill="#1a8a80"/><path d="M0.5,8.5 L3,5.5 H10 V17.5 H0.5 Z" fill="url(#ro)" stroke="#6a8a88" stroke-width="0.8"/><path d="M5.5,0 V5.5" stroke="#000" stroke-width="1.2"/><path d="M3,3.5 L5.5,6.8 L8,3.5 Z" fill="#000"/><path d="M18,12 H12.5" stroke="#000" stroke-width="1.2"/><path d="M14.5,9.5 L11,12 L14.5,14.5 Z" fill="#000"/></g><g transform="translate(205,30)" ><defs><linearGradient id="vm" x1="0" y1="0" x2="0" y2="1"><stop offset="0" stop-color="#a8efe8"/><stop offset="0.5" stop-color="#fff"/><stop offset="1" stop-color="#fff"/></linearGradient></defs><path d="M0.5,5.5 L3,3 H13.5 V12.5 L11,15 H0.5 Z" fill="#3a8a84"/><path d="M0.5,5.5 L3,3 H11 V15 H0.5 Z" fill="url(#vm)" stroke="#7a8a88" stroke-width="0.8"/><text x="9.5" y="6.3" font-family="Liberation Sans,sans-serif" font-size="8.5" font-weight="bold" fill="#111" textLength="11.5" lengthAdjust="spacingAndGlyphs">AB</text><path d="M14.5,14.5 H20 L17.2,17.5 Z" fill="#000"/></g><g transform="translate(234,33)" ><path d="M0.5,13.5 L5,9.0 H18.5 L13.5,13.5 Z" fill="#fff" stroke="#222" stroke-width="1"/><path d="M0.5,9.5 L5,5.0 H18.5 L13.5,9.5 Z" fill="#f0ffff" stroke="#222" stroke-width="1"/><path d="M0.5,5 L5,0.5 H18.5 L13.5,5 Z" fill="#86eaea" stroke="#222" stroke-width="1"/></g><g transform="translate(261,30)" ><rect x="0.5" y="0.5" width="15" height="16.5" fill="#fff" stroke="#222" stroke-width="1.1"/><path d="M4.5,0.5 V17" stroke="#555" stroke-width="0.9"/><path d="M0.5,3.5 H15.5" stroke="#999" stroke-width="0.7"/><path d="M0.5,6 H15.5" stroke="#999" stroke-width="0.7"/><path d="M0.5,8.5 H15.5" stroke="#999" stroke-width="0.7"/><path d="M0.5,11 H15.5" stroke="#999" stroke-width="0.7"/><path d="M0.5,13.5 H15.5" stroke="#999" stroke-width="0.7"/><rect x="7.5" y="11" width="12" height="8" rx="1" fill="#888" stroke="#111" stroke-width="1.1"/><rect x="9" y="9.8" width="3" height="1.6" fill="#111"/><circle cx="13.8" cy="15" r="2.8" fill="#fff" stroke="#111" stroke-width="1.2"/><rect x="12.8" y="14" width="2" height="2" fill="#ccc"/></g><g transform="translate(304,33)" ><path d="M0.5,4.5 H11.5 V14.5 H0.5 Z M0.5,4.5 L4.5,0.5 H15.5 L11.5,4.5 M15.5,0.5 V10.5 L11.5,14.5" fill="none" stroke="#55534a" stroke-width="1.1"/><path d="M4.5,0.5 V10.5 H15.5 M4.5,10.5 L0.5,14.5" fill="none" stroke="#55534a" stroke-width="1"/></g><g transform="translate(332,33)" ><path d="M0.5,4.5 H11.5 V14.5 H0.5 Z M0.5,4.5 L4.5,0.5 H15.5 L11.5,4.5 M15.5,0.5 V10.5 L11.5,14.5" fill="none" stroke="#55534a" stroke-width="1.1"/><path d="M4.5,0.5 V10.5 H15.5 M4.5,10.5 L0.5,14.5" fill="none" stroke="#a8a698" stroke-width="1"/></g><g transform="translate(360,33)" ><path d="M0.5,4.5 H11.5 V14.5 H0.5 Z M0.5,4.5 L4.5,0.5 H15.5 L11.5,4.5 M15.5,0.5 V10.5 L11.5,14.5" fill="none" stroke="#55534a" stroke-width="1.1"/></g><g transform="translate(389,33.5)" ><defs><linearGradient id="cs" x1="0" y1="0" x2="0" y2="1"><stop offset="0" stop-color="#8fe6e6"/><stop offset="0.35" stop-color="#e8ffff"/><stop offset="0.6" stop-color="#fff"/></linearGradient><pattern id="hf" width="2" height="2" patternUnits="userSpaceOnUse"><rect width="2" height="2" fill="#2a8a8a"/><rect width="1" height="1" fill="#7ac8c8"/><rect x="1" y="1" width="1" height="1" fill="#7ac8c8"/></pattern></defs><path d="M11.5,4.5 L15.5,0.5 V10.5 L11.5,14.5 Z" fill="url(#hf)" stroke="#3a7a7a" stroke-width="0.6"/><path d="M0.5,4.5 L4.5,0.5 H15.5 L11.5,4.5 Z" fill="#a6eeee" stroke="#7ab0b0" stroke-width="0.6"/><rect x="0.5" y="4.5" width="11" height="10" fill="url(#cs)" stroke="#6a7a7a" stroke-width="1"/></g><g transform="translate(427,33.5)" ><path d="M5.5,1 H17.5 L12.5,11 H1 Z" fill="none" stroke="#9a4a1c" stroke-width="1.5"/><rect x="9" y="10" width="12" height="7" fill="#ece9d8"/><ellipse cx="14.5" cy="13.2" rx="4.8" ry="2.4" fill="#eef6f2" stroke="#222" stroke-width="0.9"/><circle cx="14.5" cy="13.2" r="2.4" fill="#10806a"/><path d="M9.0,12.7 Q14.5,8.7 20.0,12.7" fill="none" stroke="#111" stroke-width="1.2"/></g><g transform="translate(457.5,30)" ><path d="M10.5,0 L0,19" stroke="#9a4a1c" stroke-width="1.6" stroke-dasharray="4,2"/><ellipse cx="11.5" cy="17" rx="4.8" ry="2.4" fill="#eef6f2" stroke="#222" stroke-width="0.9"/><circle cx="11.5" cy="17" r="2.4" fill="#10806a"/><path d="M6.0,16.5 Q11.5,12.5 17.0,16.5" fill="none" stroke="#111" stroke-width="1.2"/></g><g transform="translate(485,31)" ><path d="M2.2,-0.4999999999999998 L6.8,4.1 M6.8,-0.4999999999999998 L2.2,4.1" stroke="#9a4a1c" stroke-width="1.3"/><path d="M10.3,5.7 L14.899999999999999,10.3 M14.899999999999999,5.7 L10.3,10.3" stroke="#9a4a1c" stroke-width="1.3"/><path d="M-1.9,9.7 L2.6999999999999997,14.3 M2.6999999999999997,9.7 L-1.9,14.3" stroke="#9a4a1c" stroke-width="1.3"/><ellipse cx="13" cy="16.5" rx="4.8" ry="2.4" fill="#eef6f2" stroke="#222" stroke-width="0.9"/><circle cx="13" cy="16.5" r="2.4" fill="#10806a"/><path d="M7.5,16.0 Q13,12.0 18.5,16.0" fill="none" stroke="#111" stroke-width="1.2"/></g><g transform="translate(511,30.8)" ><path d="M1,9.5 H11 M4.5,3.5 L10,15.5 M12,2.5 L5.5,16" stroke="#9a4a1c" stroke-width="1.2" fill="none"/><text x="0" y="4" font-family="Liberation Sans,sans-serif" font-size="6.5" font-weight="bold" fill="#3a8a88">y</text><text x="0" y="19.5" font-family="Liberation Sans,sans-serif" font-size="6.5" font-weight="bold" fill="#3a8a88">z</text><path d="M15.3,7.8 L18.7,11.2 M18.7,7.8 L15.3,11.2" stroke="#5a8a8a" stroke-width="1.1"/><ellipse cx="15" cy="16.6" rx="4.8" ry="2.4" fill="#eef6f2" stroke="#222" stroke-width="0.9"/><circle cx="15" cy="16.6" r="2.4" fill="#10806a"/><path d="M9.5,16.1 Q15,12.100000000000001 20.5,16.1" fill="none" stroke="#111" stroke-width="1.2"/></g><g transform="translate(553.5,32.5)" ><path d="M0,0 V12 L3,9.2 L5.2,14 L7,13.2 L4.8,8.5 H8.5 Z" fill="#000"/><text x="8.5" y="12" font-family="Liberation Serif,serif" font-size="16" font-weight="bold" fill="#7a107a">?</text></g><path d="M608,6.5 H611 L613.5,9 V19.5 H608" fill="#f4f2ea" stroke="#a5a293" stroke-width="1"/><path d="M608,11.5 H612 M608,13.5 H612 M608,15.5 H612 M608,17.5 H612" stroke="#a5a293" stroke-width="0.9" fill="none"/><g transform="translate(623,0.5)" ><rect x="0.5" y="2" width="13" height="13.5" fill="#f0eee4" stroke="#a5a293" stroke-width="1"/><path d="M3.5,3.5 L5,0.8 H9 L10.5,3.5 Z" fill="#f0eee4" stroke="#a5a293" stroke-width="1"/><rect x="7.5" y="7" width="11" height="11.5" fill="#f2f0e6" stroke="#a5a293" stroke-width="1"/><rect x="9.2" y="9.2" width="1.6" height="1.6" fill="#a5a293"/><path d="M12.5,10.2 H16.5" stroke="#a5a293" stroke-width="1"/><rect x="9.2" y="12.2" width="1.6" height="1.6" fill="#a5a293"/><path d="M12.5,13.2 H16.5" stroke="#a5a293" stroke-width="1"/><rect x="9.2" y="15.2" width="1.6" height="1.6" fill="#a5a293"/><path d="M12.5,16.2 H16.5" stroke="#a5a293" stroke-width="1"/></g><g transform="translate(650,0)" ><path d="M0.5,1.0 V5.5 H5 V3.0" fill="none" stroke="#a5a293" stroke-width="1"/><path d="M3,0.5 H6" stroke="#a5a293" stroke-width="0.9"/><path d="M0.5,8.0 V12.5 H5 V10.0" fill="none" stroke="#a5a293" stroke-width="1"/><path d="M3,7.5 H6" stroke="#a5a293" stroke-width="0.9"/><path d="M0.5,15.0 V19.5 H5 V17.0" fill="none" stroke="#a5a293" stroke-width="1"/><path d="M3,14.5 H6" stroke="#a5a293" stroke-width="0.9"/><path d="M9,5.5 Q10,1.5 14,2.2" fill="none" stroke="#a5a293" stroke-width="1.8"/><path d="M12.5,-0.5 L17,2.8 L12.8,5.2 Z" fill="#a5a293"/><path d="M18.5,4.5 Q17.5,9 13.5,8.2" fill="none" stroke="#a5a293" stroke-width="1.8"/><path d="M15,10.8 L10.5,7.6 L14.6,5.2 Z" fill="#a5a293"/><path d="M9,12.5 H18" stroke="#a5a293" stroke-width="1"/><path d="M9,14.8 H18" stroke="#a5a293" stroke-width="1"/><path d="M9,17 H18" stroke="#a5a293" stroke-width="1"/></g><g transform="translate(678,0)" ><path d="M0.5,1.0 V5.5 H5 V3.0" fill="none" stroke="#a5a293" stroke-width="1"/><path d="M3,0.5 H6" stroke="#a5a293" stroke-width="0.9"/><path d="M0.5,8.0 V12.5 H5 V10.0" fill="none" stroke="#a5a293" stroke-width="1"/><path d="M3,7.5 H6" stroke="#a5a293" stroke-width="0.9"/><path d="M0.5,15.0 V19.5 H5 V17.0" fill="none" stroke="#a5a293" stroke-width="1"/><path d="M3,14.5 H6" stroke="#a5a293" stroke-width="0.9"/><path d="M9,5.5 Q10,1.5 14,2.2" fill="none" stroke="#a5a293" stroke-width="1.8"/><path d="M12.5,-0.5 L17,2.8 L12.8,5.2 Z" fill="#a5a293"/><path d="M18.5,4.5 Q17.5,9 13.5,8.2" fill="none" stroke="#a5a293" stroke-width="1.8"/><path d="M15,10.8 L10.5,7.6 L14.6,5.2 Z" fill="#a5a293"/><path d="M9,12.5 H18" stroke="#a5a293" stroke-width="1"/><path d="M9,14.8 H18" stroke="#a5a293" stroke-width="1"/><path d="M9,17 H18" stroke="#a5a293" stroke-width="1"/></g><g transform="translate(707,3)" ><path d="M1,4 L3,0.5 H6 L6.5,4 V14 H0.5 V6 Z" fill="none" stroke="#a5a293" stroke-width="1"/><path d="M17,4 L15,0.5 H12 L11.5,4 V14 H17.5 V6 Z" fill="none" stroke="#a5a293" stroke-width="1"/><path d="M6.5,5 H11.5 M6.5,8 H11.5 M0.5,10 H6.5 M11.5,10 H17.5" stroke="#a5a293" stroke-width="1"/></g><g transform="translate(735,3)" ><rect x="0.5" y="0.5" width="18" height="13" fill="none" stroke="#a3a092" stroke-width="1" stroke-dasharray="4,2.2"/></g><g transform="translate(760.5,8)" ><path d="M0,0 H6 L3,3.2 Z" fill="#000"/></g><g transform="translate(789,-0.5)" ><defs><linearGradient id="rp" x1="0" y1="0" x2="1" y2="1"><stop offset="0" stop-color="#fff"/><stop offset="0.45" stop-color="#e4eeff"/><stop offset="1" stop-color="#6a9af0"/></linearGradient></defs><rect x="0.5" y="0.5" width="17" height="17" fill="url(#rp)" stroke="#1a2c7c" stroke-width="1.2"/><rect x="0" y="0" width="18" height="2.6" fill="#1a2c7c"/><path d="M8,17 Q8.2,13.5 9.5,12.3 L14,8" fill="none" stroke="#0c1650" stroke-width="1.3"/><path d="M9,13 L7,11.3" stroke="#0c1650" stroke-width="1"/><path d="M4,9.5 h1 M6,7.5 h1 M5,11.5 h1 M7.5,9.5 h1 M9,7.5 h1 M4,13.5 h1 M10.5,5.5 h1 M7,5.5 h1" stroke="#5a7ad0" stroke-width="1"/></g><g transform="translate(824.5,9.5)" ><path d="M0,0 L-3.5,-5.4 M0,0 L-3.5,6.6 M0,0 H9" stroke="#000" stroke-width="1.1" fill="none"/><circle cx="-3.6" cy="-5.6" r="2.3" fill="#20b040" stroke="#0a7020" stroke-width="0.5"/><circle cx="9.2" cy="0" r="2.4" fill="#c01818" stroke="#800" stroke-width="0.5"/><circle cx="-3.6" cy="6.8" r="2.3" fill="#20d0d8" stroke="#0a9098" stroke-width="0.5"/></g><g transform="translate(845,0)" ><path d="M9.5,9.1 L15.5,15.4" stroke="#6a4a2a" stroke-width="2" stroke-linecap="round"/><path d="M8.9,8.8 L14.9,15.1" stroke="#c9a070" stroke-width="0.7"/><circle cx="6.3" cy="5.8" r="4.6" fill="#fbfbf8" stroke="#222" stroke-width="1.1"/><circle cx="6.3" cy="5.8" r="1.1" fill="#000"/><path d="M12,1.5 H18 M13,3.5 H18 M14,5.5 H17" stroke="#2a3ab0" stroke-width="1" fill="none"/><path d="M14.5,6.5 Q18.5,7 16.5,11" fill="none" stroke="#1a2aa0" stroke-width="1.3"/><path d="M5,12 Q3.5,17.5 9,17.5" fill="none" stroke="#0a1890" stroke-width="1.7"/><path d="M8,14.5 L12,17.5 L8,20 Z" fill="#0a1890"/></g><g transform="translate(873,-1)" ><path d="M1,0 L5,4 M5,0 L1,4" stroke="#bab7a9" stroke-width="1"/><path d="M6,12 V6.5 Q6,5 7,5 Q8,5 8,6.5 V3.5 Q8,2 9,2 Q10,2 10,3.5 V3 Q10,1.5 11,1.5 Q12,1.5 12,3 V4.5 Q12,3.5 13,3.5 Q14,3.5 14,5 V12 Q14,17 11.5,19 H8 Q5,15 2.5,12.5 Q2,11 3.5,10.8 Q5,11 6,12 Z" fill="#f3f1e8" stroke="#bab7a9" stroke-width="1"/><path d="M8,6.5 V10 M10,3.5 V10 M12,4.5 V10" stroke="#bab7a9" stroke-width="0.8"/></g><g transform="translate(0,0)" ><path d="M911.5,11.5 L917.5,17.5" stroke="#6a4a2a" stroke-width="2" stroke-linecap="round"/><path d="M910.9,11.2 L916.9,17.2" stroke="#c9a070" stroke-width="0.7"/><circle cx="907.5" cy="7.5" r="5.7" fill="#fbfbf8" stroke="#222" stroke-width="1.1"/><path d="M904.5,7.5 H910.5 M907.5,4.5 V10.5" stroke="#000" stroke-width="1.8"/></g></svg><div class="vsep" style="left:179px;top:0;height:25px;"></div><div class="vsep" style="left:291px;top:28px;height:25px;"></div><div class="vsep" style="left:416px;top:28px;height:25px;"></div><div class="vsep" style="left:541px;top:28px;height:25px;"></div><div class="vsep" style="left:777px;top:0;height:22px;"></div>
</div>
<div class="abs" style="left:751px;top:551px;width:211px;height:67px;background:rgba(255,255,255,0.62);"></div><svg class="abs" style="left:751px;top:551px" width="211" height="67" viewBox="751 551 211 67"><defs><linearGradient id="bw" x1="0" y1="0" x2="1" y2="1"><stop offset="0" stop-color="#9fb4c6"/><stop offset="1" stop-color="#c8d2e0"/></linearGradient><linearGradient id="pw" x1="1" y1="0" x2="0" y2="1"><stop offset="0" stop-color="#f6b4b8"/><stop offset="1" stop-color="#ee8e98"/></linearGradient></defs><g stroke="none"><path d="M776,590.5 C764,582 753,570 754,562 C756,553.5 768,553.5 779,561 C789,569 796,582 790,591.5 C792.5,583 787,572 778,564.5 C769,558.5 760,558 758.3,563 C757,570 766,581 776,590.5 Z" fill="url(#bw)"/><path d="M780,601.5 C783,608.5 794,608.5 801,600.5 C809.5,590 811.5,577 806.5,572.5 C802,569.5 797,571 793,575.5 C798,573.5 802.5,574 804.5,578 C806.5,584 803.5,592 797.5,598 C791.5,603.5 785,604.5 780,601.5 Z" fill="url(#pw)"/><path d="M792,577 C786,584 780,594 774,598 C768,601 762,598 762,593 C763,588 769,585 776,585" fill="none" stroke="#cfd7e3" stroke-width="1.6" stroke-linecap="round"/></g></svg><div class="abs" style="left:820px;top:553px;width:125px;height:36px;font:bold 28px/36px 'Noto Serif CJK SC','Liberation Serif',serif;color:#8ed2a8;letter-spacing:1.6px;white-space:nowrap;">野火论坛</div><div class="abs" style="left:809px;top:590px;width:150px;height:20px;font:15.5px/20px 'Liberation Sans',sans-serif;color:#bcd9e0;white-space:nowrap;letter-spacing:0.35px;">www.proewildfire.cn</div>
</body></html>
